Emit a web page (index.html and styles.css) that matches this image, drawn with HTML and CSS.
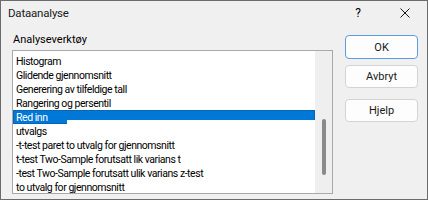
FILE: index.html
```html
<!DOCTYPE html>
<html lang="no">
<head>
    <meta charset="UTF-8">
    <meta name="viewport" content="width=device-width, initial-scale=1.0">
    <title>Dataanalyse</title>
    <link rel="stylesheet" href="styles.css">
</head>
<body>
    <div class="dialog">
        <div class="titlebar">
            <span class="title">Dataanalyse</span>
            <span class="help">?</span>
            <span class="close">
                <svg viewBox="0 0 10 10" width="10" height="10">
                    <path d="M0.5 0.5 L9.5 9.5 M9.5 0.5 L0.5 9.5" stroke="#1a1a1a" stroke-width="1" fill="none" />
                </svg>
            </span>
        </div>

        <div class="content">
            <div class="tools">
                <div class="label">Analyseverktøy</div>
                <div class="listbox">
                    <ul class="items">
                        <li>Histogram</li>
                        <li>Glidende gjennomsnitt</li>
                        <li>Generering av tilfeldige tall</li>
                        <li>Rangering og persentil</li>
                        <li class="selected">Red inn</li>
                        <li>utvalgs</li>
                        <li>-t-test paret to utvalg for gjennomsnitt</li>
                        <li>t-test Two-Sample forutsatt lik varians t</li>
                        <li>-test Two-Sample forutsatt ulik varians z-test</li>
                        <li>to utvalg for gjennomsnitt</li>
                    </ul>
                    <div class="scrollbar">
                        <div class="thumb"></div>
                    </div>
                </div>
            </div>

            <div class="buttons">
                <button class="btn default">OK</button>
                <button class="btn">Avbryt</button>
                <button class="btn help-btn">Hjelp</button>
            </div>
        </div>
    </div>
</body>
</html>
```

FILE: styles.css
```css
* {
    margin: 0;
    padding: 0;
    box-sizing: border-box;
}

body {
    font-family: Roboto, "Noto Sans", sans-serif;
    font-size: 11px;
    color: #000;
    background-color: #f0f0f0;
}

.dialog {
    width: 428px;
    height: 200px;
    border: 1px solid #6b6b6b;
    background-color: #f0f0f0;
    display: flex;
    flex-direction: column;
}

/* Title bar */
.titlebar {
    height: 23px;
    display: flex;
    align-items: center;
    padding-left: 7px;
}

.title {
    flex: 1;
    font-size: 11.5px;
    letter-spacing: -0.2px;
    color: #1a1a1a;
}

.help {
    width: 14px;
    text-align: center;
    font-size: 12px;
    margin-right: 35px;
}

.close {
    width: 10px;
    height: 10px;
    margin-right: 17px;
    display: flex;
}

/* Body */
.content {
    flex: 1;
    display: flex;
    padding: 9px 9px 0 11px;
    gap: 12px;
}

.tools {
    width: 322px;
    display: flex;
    flex-direction: column;
}

.label {
    height: 17px;
    line-height: 14px;
    padding-left: 1px;
}

.listbox {
    height: 144px;
    border: 1px solid #a9a9a9;
    background-color: #fff;
    display: flex;
}

.items {
    flex: 1;
    list-style: none;
    padding-top: 3px;
    overflow: hidden;
    font-size: 10.5px;
    letter-spacing: -0.45px;
}

.items li {
    height: 14px;
    line-height: 15px;
    padding-left: 3px;
    white-space: nowrap;
}

.items li.selected {
    background-color: #0078d7;
    border: 1px solid #0a64b4;
    color: #fff;
    line-height: 13px;
    padding-left: 2px;
    position: relative;
}

/* redraw glitch from the original screenshot */
.items li.selected:after {
    content: "";
    position: absolute;
    left: 53px;
    top: 9px;
    right: -1px;
    bottom: -1px;
    background-color: #fff;
}

.scrollbar {
    width: 17px;
    background-color: #efefef;
    display: flex;
    justify-content: center;
    padding-top: 68px;
}

.thumb {
    width: 4px;
    height: 56px;
    border-radius: 2px;
    background-color: #8a8a8a;
}

.buttons {
    display: flex;
    flex-direction: column;
    width: 73px;
    padding-top: 2px;
}

.btn {
    font-family: inherit;
    font-size: 11px;
    color: #1a1a1a;
    background-color: #fdfdfd;
    border: 1px solid #d4d4d4;
    border-radius: 4px;
    height: 23px;
    margin-bottom: 6px;
}

.btn.default {
    border-color: #5b9ddf;
    height: 24px;
}

.btn.help-btn {
    margin-top: 5px;
}
```
